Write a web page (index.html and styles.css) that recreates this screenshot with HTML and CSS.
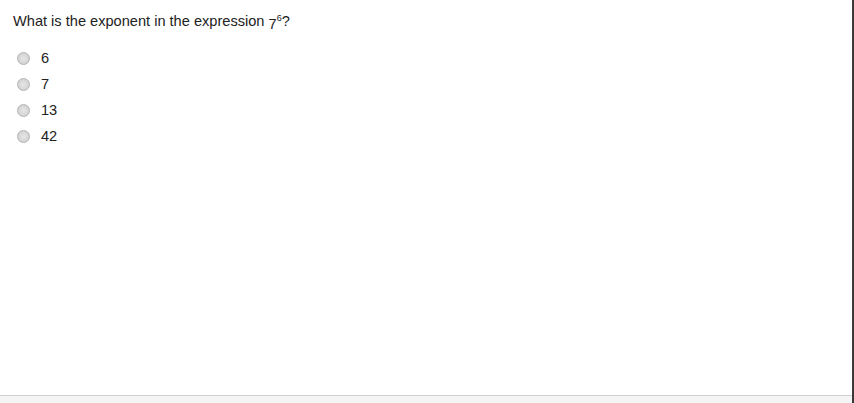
FILE: index.html
```html
<!DOCTYPE html>
<html>
<head>
<meta charset="utf-8">
<link rel="stylesheet" href="styles.css">
</head>
<body>
<div class="page">
  <div class="content">
    <p class="question">What is the exponent in the expression <span class="base">7</span><sup class="exp">6</sup>?</p>
    <ul class="options">
      <li class="option"><span class="radio"></span><span class="label">6</span></li>
      <li class="option"><span class="radio"></span><span class="label">7</span></li>
      <li class="option"><span class="radio"></span><span class="label">13</span></li>
      <li class="option"><span class="radio"></span><span class="label">42</span></li>
    </ul>
  </div>
  <div class="footer"></div>
</div>
</body>
</html>
```
FILE: styles.css
```css
html, body {
  margin: 0;
  padding: 0;
  height: 100%;
}
body {
  font-family: "Liberation Sans", Arial, sans-serif;
  color: #222;
  background: #fff;
}
.page {
  height: 403px;
  display: flex;
  flex-direction: column;
  border-right: 2px solid #3a3a3a;
  box-sizing: border-box;
}
.content {
  flex: 1;
  padding: 12px 13px 0;
}
.question {
  margin: 0;
  font-size: 14.6px;
  line-height: 18px;
}
.base {
  position: relative;
  top: 3px;
}
.exp {
  font-size: 9px;
  vertical-align: 0;
  position: relative;
  top: -5px;
}
.options {
  list-style: none;
  margin: 13px 0 0;
  padding: 0;
}
.option {
  display: flex;
  align-items: center;
  height: 26px;
  font-size: 14.6px;
}
.radio {
  width: 11px;
  height: 11px;
  border-radius: 50%;
  border: 1px solid #b4b4b4;
  background: radial-gradient(circle at 50% 50%, #e6e6e6 0%, #d6d6d6 60%, #c8c8c8 100%);
  margin-left: 4px;
  margin-right: 11px;
  flex: none;
}
.label {
  line-height: 18px;
}
.footer {
  height: 7px;
  border-top: 1px solid #cfcfcf;
  background: #f4f4f4;
}
```
